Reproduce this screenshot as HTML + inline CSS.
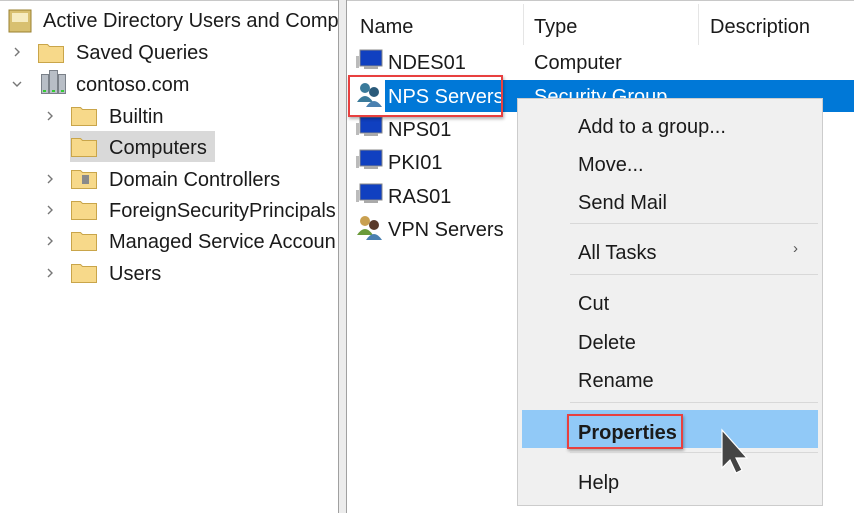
<!DOCTYPE html><html><head><style>
body{margin:0;width:854px;height:513px;overflow:hidden;background:#fff;font-family:"Liberation Sans",sans-serif;font-size:20px;color:#1a1a1a;position:relative}
.a{position:absolute;white-space:nowrap;line-height:1}
.mi{position:absolute;left:578px;line-height:1}
.sep{position:absolute;left:570px;width:248px;height:1px;background:#d8d8d8}
</style></head><body>
<div class="a" style="left:0;top:0;width:854px;height:1px;background:#c8c8c8"></div>
<div class="a" style="left:338px;top:0;width:9px;height:513px;background:#ececec;border-left:1px solid #a0a0a0;border-right:1px solid #a0a0a0;box-sizing:border-box"></div>
<svg class="a" style="left:8px;top:9px" width="24" height="24"><rect x="1" y="1" width="22" height="22" fill="#d8c070" stroke="#9a8030"/><rect x="4" y="4" width="16" height="9" fill="#f6ecc0"/></svg>
<div class="a" style="left:43px;top:11px">Active Directory Users and Comp</div>
<div class="a" style="left:70px;top:131px;width:145px;height:31px;background:#d9d9d9"></div>
<svg class="a" style="left:0;top:0" width="340" height="300">
<g fill="none" stroke="#777" stroke-width="1.4">
<path d="M15 48l4 4-4 4"/><path d="M13 82l4 4 4-4"/><path d="M48 112l4 4-4 4"/><path d="M48 175l4 4-4 4"/><path d="M48 206l4 4-4 4"/><path d="M48 237l4 4-4 4"/><path d="M48 269l4 4-4 4"/>
</g>
<g fill="#f7d98a" stroke="#c9a54a">
<path d="M38.5 44.5h9l2 2h14v16h-25z"/>
<path d="M71.5 107.5h9l2 2h14v16h-25z"/>
<path d="M71.5 138.5h9l2 2h14v16h-25z"/>
<path d="M71.5 170.5h9l2 2h14v16h-25z"/>
<path d="M71.5 201.5h9l2 2h14v16h-25z"/>
<path d="M71.5 232.5h9l2 2h14v16h-25z"/>
<path d="M71.5 264.5h9l2 2h14v16h-25z"/>
</g>
<rect x="82" y="175" width="7" height="9" fill="#8a8a8a"/>
<g fill="#b8bec6" stroke="#7a8088"><rect x="41.5" y="74.5" width="7" height="19"/><rect x="49.5" y="70.5" width="8" height="23"/><rect x="58.5" y="74.5" width="7" height="19"/></g>
<g fill="#3c3"><rect x="43" y="90" width="3" height="2"/><rect x="52" y="90" width="3" height="2"/><rect x="61" y="90" width="3" height="2"/></g>
</svg>
<div class="a" style="left:76px;top:43px">Saved Queries</div>
<div class="a" style="left:76px;top:75px">contoso.com</div>
<div class="a" style="left:109px;top:107px">Builtin</div>
<div class="a" style="left:109px;top:138px">Computers</div>
<div class="a" style="left:109px;top:170px">Domain Controllers</div>
<div class="a" style="left:109px;top:201px">ForeignSecurityPrincipals</div>
<div class="a" style="left:109px;top:232px">Managed Service Accoun</div>
<div class="a" style="left:109px;top:264px">Users</div>
<div class="a" style="left:360px;top:17px">Name</div>
<div class="a" style="left:534px;top:17px">Type</div>
<div class="a" style="left:710px;top:17px">Description</div>
<div class="a" style="left:523px;top:4px;width:1px;height:41px;background:#e5e5e5"></div>
<div class="a" style="left:698px;top:4px;width:1px;height:41px;background:#e5e5e5"></div>
<div class="a" style="left:385px;top:80px;width:469px;height:32px;background:#0078d7"></div>
<svg class="a" style="left:355px;top:48px" width="30" height="200">
<g><rect x="5" y="2" width="22" height="16" fill="#1040c0" stroke="#888"/><rect x="1" y="8" width="3" height="12" fill="#bbb"/><rect x="9" y="18" width="14" height="3" fill="#aaa"/></g>
<g transform="translate(0,67)"><rect x="5" y="2" width="22" height="16" fill="#1040c0" stroke="#888"/><rect x="1" y="8" width="3" height="12" fill="#bbb"/><rect x="9" y="18" width="14" height="3" fill="#aaa"/></g>
<g transform="translate(0,100)"><rect x="5" y="2" width="22" height="16" fill="#1040c0" stroke="#888"/><rect x="1" y="8" width="3" height="12" fill="#bbb"/><rect x="9" y="18" width="14" height="3" fill="#aaa"/></g>
<g transform="translate(0,134)"><rect x="5" y="2" width="22" height="16" fill="#1040c0" stroke="#888"/><rect x="1" y="8" width="3" height="12" fill="#bbb"/><rect x="9" y="18" width="14" height="3" fill="#aaa"/></g>
<g transform="translate(0,34)"><circle cx="10" cy="6" r="5" fill="#3a7a9a"/><path d="M2 20q8-12 16 0z" fill="#3a7a9a"/><circle cx="19" cy="10" r="5" fill="#2a5a7a"/><path d="M11 25q8-12 16 0z" fill="#4a80b0"/></g>
<g transform="translate(0,167)"><circle cx="10" cy="6" r="5" fill="#c9a050"/><path d="M2 20q8-12 16 0z" fill="#6a9a3a"/><circle cx="19" cy="10" r="5" fill="#5a3a2a"/><path d="M11 25q8-12 16 0z" fill="#4a80b0"/></g>
</svg>
<div class="a" style="left:388px;top:53px">NDES01</div>
<div class="a" style="left:534px;top:53px">Computer</div>
<div class="a" style="left:388px;top:87px;color:#fff">NPS Servers</div>
<div class="a" style="left:534px;top:87px;color:#fff">Security Group</div>
<div class="a" style="left:388px;top:120px">NPS01</div>
<div class="a" style="left:388px;top:153px">PKI01</div>
<div class="a" style="left:388px;top:187px">RAS01</div>
<div class="a" style="left:388px;top:220px">VPN Servers</div>
<div class="a" style="left:348px;top:75px;width:155px;height:42px;border:2px solid #e8403f;box-sizing:border-box;box-shadow:1px 2px 3px rgba(0,0,0,.3)"></div>
<div class="a" style="left:517px;top:98px;width:306px;height:408px;background:#f0f0f0;border:1px solid #ccc;box-sizing:border-box"></div>
<div class="mi" style="top:117px">Add to a group...</div>
<div class="mi" style="top:155px">Move...</div>
<div class="mi" style="top:193px">Send Mail</div>
<div class="sep" style="top:223px"></div>
<div class="mi" style="top:243px">All Tasks</div>
<div class="a" style="left:793px;top:241px;font-size:15px;color:#555">›</div>
<div class="sep" style="top:274px"></div>
<div class="mi" style="top:294px">Cut</div>
<div class="mi" style="top:333px">Delete</div>
<div class="mi" style="top:371px">Rename</div>
<div class="sep" style="top:402px"></div>
<div class="a" style="left:522px;top:410px;width:296px;height:38px;background:#91c9f7"></div>
<div class="mi" style="top:423px;font-weight:bold">Properties</div>
<div class="a" style="left:567px;top:414px;width:116px;height:35px;border:2px solid #e8403f;box-sizing:border-box;box-shadow:1px 2px 3px rgba(0,0,0,.3)"></div>
<div class="sep" style="top:452px"></div>
<div class="mi" style="top:473px">Help</div>
<svg class="a" style="left:720px;top:428px" width="34" height="48"><path d="M2 2v38l8-8 6 13 6-3-6-12h11z" fill="#444" stroke="#fff" stroke-width="1.2"/></svg>
</body></html>
